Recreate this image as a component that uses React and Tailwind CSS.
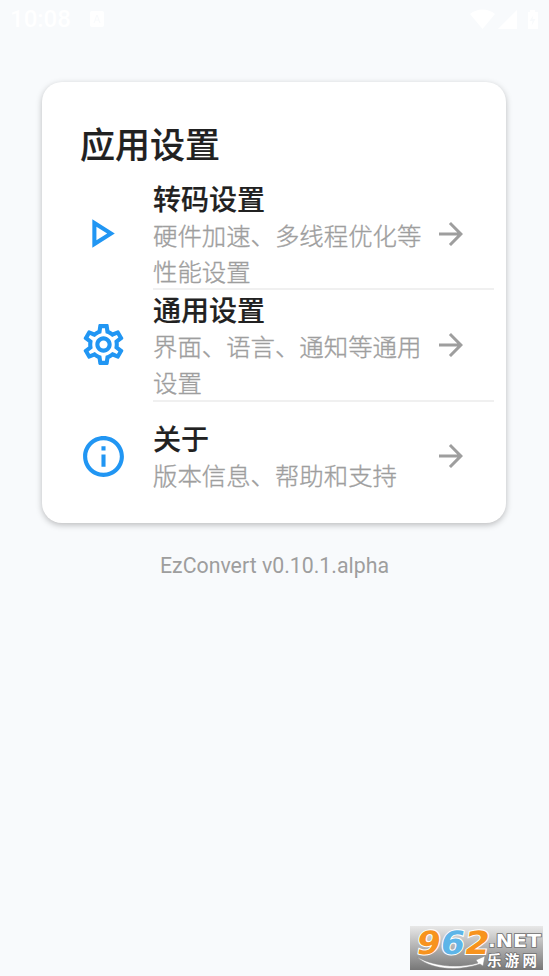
import { MdArrowForward, MdOutlineInfo, MdOutlinePlayArrow, MdOutlineSettings } from "react-icons/md";

const items = [
  {
    icon: MdOutlinePlayArrow,
    nudge: "-ml-[3px] mr-[3px]",
    title: "转码设置",
    lines: ["硬件加速、多线程优化等", "性能设置"],
  },
  {
    icon: MdOutlineSettings,
    nudge: "",
    title: "通用设置",
    lines: ["界面、语言、通知等通用", "设置"],
  },
  { icon: MdOutlineInfo, nudge: "", title: "关于", lines: ["版本信息、帮助和支持"] },
];

const StatusBar = () => (
  <header className="flex h-[38px] items-center justify-between pl-[10px] pr-[9px] text-white">
    <div className="flex items-center gap-[18px]">
      <span className="text-[24px] font-medium leading-none">10:08</span>
      <svg className="h-4 w-4" viewBox="0 0 16 16">
        <rect x="1" width="14" height="16" rx="2" fill="currentColor" />
        <path d="M5 12l3-8 3 8M6 9h4" fill="none" stroke="#f8fafc" strokeWidth="1" />
      </svg>
    </div>
    <svg className="h-[21px] w-[70px]" viewBox="0 0 70 21" fill="currentColor">
      <path d="M0 5C7-1 18-1 25 5L12.500 20z" />
      <path d="M47 1v19H28z" />
      <path d="M58 3h2V1h5v2h3v17H58z" />
      <path d="M63.500 6l-4 6h3l-1 5 4-7h-3z" fill="#f8fafc" />
    </svg>
  </header>
);

const SettingItem = ({ item, last }) => (
  <li className="flex h-[111.300px]">
    <div className="flex w-[74px] shrink-0 items-center pb-[2px]">
      <item.icon className={`h-[49px] w-[49px] text-[#2196f3] ${item.nudge}`} />
    </div>
    <div className={`flex flex-1 items-center ${last ? "pb-[2px]" : "border-b-2 border-[#f0f0f0]"}`}>
      <div className="w-[280px] shrink-0 whitespace-nowrap pt-[6px]">
        <h2 className="text-[28px] font-medium leading-[36px] text-[#212121] [-webkit-text-stroke:0.2px_#212121]">
          {item.title}
        </h2>
        {item.lines.map((line) => (
          <p
            key={line}
            className="text-[24.400px] font-light leading-[36px] text-[#9e9e9e] [-webkit-text-stroke:0.35px_#9e9e9e]"
          >
            {line}
          </p>
        ))}
      </div>
      <MdArrowForward className="h-9 w-9 text-[#9e9e9e]" />
    </div>
  </li>
);

// Site badge in the bottom corner
const SiteBadge = () => (
  <svg className="absolute bottom-[6px] right-[6px] h-[44px] w-[133px] overflow-visible" viewBox="0 0 133 44">
    <defs>
      <linearGradient id="badge" x1="0" y1="0" x2="0" y2="1">
        <stop offset="0" stopColor="#e8e8e8" />
        <stop offset="1" stopColor="#777777" />
      </linearGradient>
    </defs>
    <rect width="133" height="44" fill="url(#badge)" />
    <g
      transform="translate(5 0) skewX(-10)"
      fontFamily="DejaVu Sans, sans-serif"
      fontWeight="bold"
      fontSize="32"
      stroke="#ffffff"
      strokeWidth="2"
      paintOrder="stroke"
    >
      <text x="5" y="28" textLength="24" lengthAdjust="spacingAndGlyphs" fill="#f7931e">9</text>
      <text x="29" y="28" textLength="24" lengthAdjust="spacingAndGlyphs" fill="#5db5e8">6</text>
      <text x="53" y="28" textLength="25" lengthAdjust="spacingAndGlyphs" fill="#f7931e">2</text>
    </g>
    <path d="M7 31C23 40 47 43 68 37l-2-3 9-4-2 10-3-2C46 46 20 43 7 31z" fill="#ffffff" stroke="#888888" strokeWidth="0.500" />
    <g fill="#ffffff" stroke="#707070" strokeWidth="1.500" paintOrder="stroke" fontWeight="bold">
      <text x="78" y="21" fontSize="17" fontFamily="DejaVu Sans, sans-serif" textLength="53" lengthAdjust="spacingAndGlyphs">.NET</text>
      <text x="77" y="39.500" fontSize="14.500" fontFamily="Noto Sans CJK SC, sans-serif" textLength="50">乐游网</text>
    </g>
  </svg>
);

export default function App() {
  return (
    <div className="relative flex h-[976px] w-[549px] flex-col overflow-hidden bg-[#f8fafc] font-[Roboto,'Noto_Sans_CJK_SC',sans-serif]">
      <StatusBar />
      <main className="mt-[44px] ml-[42px] h-[441px] w-[464px] rounded-[20px] bg-white pt-[37px] pl-[37px] pr-[12px] shadow-[0_2px_6px_rgba(0,0,0,0.25)]">
        <h1 className="h-[60px] pl-px pt-[4px] text-[35px] font-medium leading-[48px] text-[#212121] [-webkit-text-stroke:0.2px_#212121]">
          应用设置
        </h1>
        <ul>
          {items.map((item, i) => (
            <SettingItem key={item.title} item={item} last={i === items.length - 1} />
          ))}
        </ul>
      </main>
      <p className="mt-[29px] text-center text-[21.300px] leading-[28px] text-[#9e9e9e]">EzConvert v0.10.1.alpha</p>
      <SiteBadge />
    </div>
  );
}
